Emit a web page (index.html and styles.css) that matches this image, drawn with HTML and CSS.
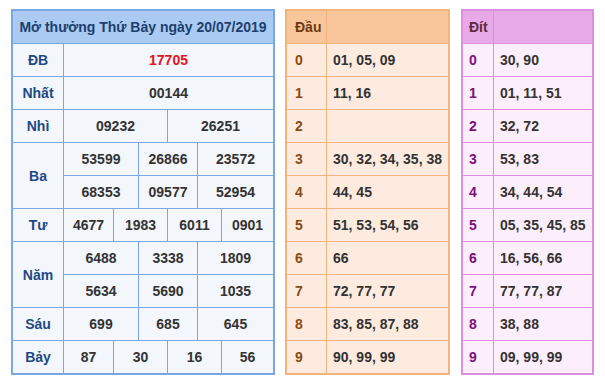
FILE: index.html
```html
<!DOCTYPE html>
<html lang="vi">
<head>
<meta charset="utf-8">
<title>Kết quả</title>
<link rel="stylesheet" href="styles.css">
</head>
<body>
<div class="wrap">
  <div class="kq">
    <div class="hd c-all">Mở thưởng Thứ Bảy ngày 20/07/2019</div>
    <div class="lb">ĐB</div><div class="c-all red">17705</div>
    <div class="lb">Nhất</div><div class="c-all">00144</div>
    <div class="lb">Nhì</div><div class="h1">09232</div><div class="h2">26251</div>
    <div class="lb r2">Ba</div><div class="t1">53599</div><div class="t2">26866</div><div class="t3">23572</div>
    <div class="t1">68353</div><div class="t2">09577</div><div class="t3">52954</div>
    <div class="lb">Tư</div><div class="q1">4677</div><div class="q2">1983</div><div class="q3">6011</div><div class="q4">0901</div>
    <div class="lb r2">Năm</div><div class="t1">6488</div><div class="t2">3338</div><div class="t3">1809</div>
    <div class="t1">5634</div><div class="t2">5690</div><div class="t3">1035</div>
    <div class="lb">Sáu</div><div class="t1">699</div><div class="t2">685</div><div class="t3">645</div>
    <div class="lb">Bảy</div><div class="q1">87</div><div class="q2">30</div><div class="q3">16</div><div class="q4">56</div>
  </div>

  <div class="lt dau">
    <div class="th k">Đầu</div><div class="th"></div>
    <div class="k">0</div><div class="v">01, 05, 09</div>
    <div class="k">1</div><div class="v">11, 16</div>
    <div class="k">2</div><div class="v"></div>
    <div class="k">3</div><div class="v">30, 32, 34, 35, 38</div>
    <div class="k">4</div><div class="v">44, 45</div>
    <div class="k">5</div><div class="v">51, 53, 54, 56</div>
    <div class="k">6</div><div class="v">66</div>
    <div class="k">7</div><div class="v">72, 77, 77</div>
    <div class="k">8</div><div class="v">83, 85, 87, 88</div>
    <div class="k">9</div><div class="v">90, 99, 99</div>
  </div>

  <div class="lt dit">
    <div class="th k">Đít</div><div class="th"></div>
    <div class="k">0</div><div class="v">30, 90</div>
    <div class="k">1</div><div class="v">01, 11, 51</div>
    <div class="k">2</div><div class="v">32, 72</div>
    <div class="k">3</div><div class="v">53, 83</div>
    <div class="k">4</div><div class="v">34, 44, 54</div>
    <div class="k">5</div><div class="v">05, 35, 45, 85</div>
    <div class="k">6</div><div class="v">16, 56, 66</div>
    <div class="k">7</div><div class="v">77, 77, 87</div>
    <div class="k">8</div><div class="v">38, 88</div>
    <div class="k">9</div><div class="v">09, 99, 99</div>
  </div>
</div>
</body>
</html>
```

FILE: styles.css
```css
html, body {
  margin: 0;
  padding: 0;
  background: #ffffff;
}
body {
  font-family: "Liberation Sans", Arial, sans-serif;
  font-size: 14px;
  font-weight: bold;
  color: #333333;
}
.wrap {
  display: flex;
  align-items: flex-start;
  padding: 9px 0 0 11px;
}

/* Main results table */
.kq {
  display: grid;
  grid-template-columns: 50px 49px 24px 28px 29px 23px 51px;
  grid-auto-rows: 32px;
  gap: 1px;
  background: #7aa6e3;
  border: 2px solid #7aa6e3;
  margin-right: 10px;
}
.kq > div {
  background: #f3f6fa;
  display: flex;
  align-items: center;
  justify-content: center;
}
.kq .hd {
  background: #aacaf1;
  color: #1d3f6e;
  grid-column: 1 / 8;
}
.kq .lb {
  grid-column: 1;
  color: #1d4a82;
}
.kq .r2 { grid-row: span 2; }
.kq .c-all { grid-column: 2 / 8; }
.kq .hd.c-all { grid-column: 1 / 8; }
.kq .red { color: #e0141e; }
.kq .h1 { grid-column: 2 / 5; }
.kq .h2 { grid-column: 5 / 8; }
.kq .t1 { grid-column: 2 / 4; }
.kq .t2 { grid-column: 4 / 6; }
.kq .t3 { grid-column: 6 / 8; }
.kq .q1 { grid-column: 2 / 3; }
.kq .q2 { grid-column: 3 / 5; }
.kq .q3 { grid-column: 5 / 7; }
.kq .q4 { grid-column: 7 / 8; }

/* Loto tables */
.lt {
  display: grid;
  grid-auto-rows: 32px;
  gap: 1px;
}
.lt > div {
  display: flex;
  align-items: center;
}
.dau {
  grid-template-columns: 39px 121px;
  background: #f2b47d;
  border: 2px solid #f2b47d;
  margin-right: 11px;
}
.dau > div { background: #fdebdf; }
.dau .k { color: #8a4a12; padding-left: 8px; }
.dau .v { padding-left: 6px; }
.dau .th { background: #f9c69b; color: #6e3a12; }

.dit {
  grid-template-columns: 30px 98px;
  background: #dc8fdc;
  border: 2px solid #dc8fdc;
}
.dit > div { background: #fdeefb; }
.dit .k { color: #7d107d; padding-left: 6px; }
.dit .v { padding-left: 6px; }
.dit .th { background: #e8a9e8; color: #5e2a3e; }
```
